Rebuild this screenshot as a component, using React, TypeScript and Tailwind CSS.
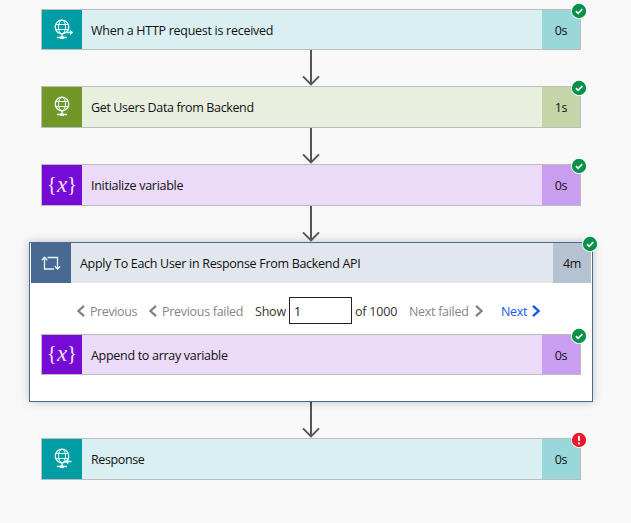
import type { ReactNode } from 'react';

type Tone = { icon: string; body: string; time: string };

const teal: Tone = { icon: 'bg-[#009da5]', body: 'bg-[#d9eff1]', time: 'bg-[#99d7db]' };
const green: Tone = { icon: 'bg-[#709727]', body: 'bg-[#e8efdf]', time: 'bg-[#c5d5a9]' };
const purple: Tone = { icon: 'bg-[#770bd6]', body: 'bg-[#ebdaf8]', time: 'bg-[#c99def]' };

function Globe({ arrow }: { arrow?: 'out' | 'in' }) {
  return (
    <svg className="ml-0.5" width="22" height="22" viewBox="0 0 22 22" fill="none" stroke="#e9ffff" strokeWidth="1.3">
      <circle cx="10" cy="8" r="6.8" />
      <ellipse cx="10" cy="8" rx="3.5" ry="6.8" strokeWidth="1" />
      <path d="M4 5.5h12M4 10.5h12" strokeWidth="1" />
      <path d="M10 15v4M5 18.5h10" strokeWidth="1.3" />
      <path d="M8.2 18.7h3.6" strokeWidth="2.6" />
      {arrow === 'out' && <path d="M15 13.5h5.3M18 11.4l2.3 2.1-2.3 2.1" />}
      {arrow === 'in' && <path d="M19.5 13.5h-5.3M16.3 11.4L14 13.5l2.3 2.1" />}
    </svg>
  );
}

function Variable() {
  return (
    <span className="flex items-center pb-0.5 font-['Liberation_Serif',serif] text-[21px] leading-none text-[#f4e5ff]">
      <span>{'{'}</span>
      <span className="text-[23px] italic leading-[21px]">x</span>
      <span>{'}'}</span>
    </span>
  );
}

function Status({ failed, className }: { failed?: boolean; className: string }) {
  return (
    <svg className={`absolute size-4 ${className}`} viewBox="0 0 16 16" fill="none">
      <circle cx="8" cy="8" r="8" fill="#fff" />
      <circle cx="8" cy="8" r="7.2" fill={failed ? '#e81c2d' : '#07924a'} />
      {failed ? (
        <path d="M8 3.8v5M8 10.4v1.8" stroke="#fff" strokeWidth="1.9" />
      ) : (
        <path d="M4.9 8.1l2.2 2.2 4.2-4.2" stroke="#fff" strokeWidth="1.6" />
      )}
    </svg>
  );
}

type CardProps = {
  tone: Tone;
  icon: ReactNode;
  title: string;
  time: string;
  size: string;
  tracking: string;
  failed?: boolean;
};

function Card({ tone, icon, title, time, size, tracking, failed }: CardProps) {
  return (
    <div className={`relative flex w-[540px] shrink-0 border border-[#bcbcbc] ${size} ${tone.body}`}>
      <div className={`flex w-10 shrink-0 items-center justify-center ${tone.icon}`}>{icon}</div>
      <div className={`flex flex-1 items-center whitespace-nowrap pl-[9px] pt-[3px] ${tracking}`}>{title}</div>
      <div className={`flex w-[38px] items-center justify-center pt-[3px] tracking-[-0.3px] ${tone.time}`}>{time}</div>
      <Status failed={failed} className="-right-[7px] -top-[7px]" />
    </div>
  );
}

function Arrow({ height, className }: { height: number; className: string }) {
  return (
    <svg className={`shrink-0 ${className}`} width="20" height={height} fill="none" stroke="#555" strokeWidth="2">
      <path d={`M10 0V${height - 1.6}M2 ${height - 9.6}l8 8 8-8`} />
    </svg>
  );
}

function Chevron({ right, color }: { right?: boolean; color: string }) {
  return (
    <svg className="-mt-0.5 shrink-0" width="8" height="12" fill="none" stroke={color} strokeWidth="2.3">
      <path d={right ? 'M1 .8L6.5 6 1 11.2' : 'M7 .8L1.5 6 7 11.2'} />
    </svg>
  );
}

export default function App() {
  return (
    <main className="flex h-[523px] w-[631px] flex-col items-center overflow-hidden bg-[#f8f8f8] pr-[9px] pt-[9px] font-['Open_Sans',sans-serif] text-[12.5px] text-[#111]">
      <Card tone={teal} icon={<Globe arrow="out" />} title="When a HTTP request is received" time="0s" size="h-[41px]" tracking="tracking-[-0.28px]" />
      <Arrow height={36} className="" />
      <Card tone={green} icon={<Globe />} title="Get Users Data from Backend" time="1s" size="h-[42px]" tracking="tracking-[-0.36px]" />
      <Arrow height={36} className="" />
      <Card tone={purple} icon={<Variable />} title="Initialize variable" time="0s" size="h-[42px]" tracking="tracking-[-0.28px]" />
      <Arrow height={36} className="relative z-10" />
      <section className="relative flex h-40 w-[564px] shrink-0 flex-col items-center border border-[#486991] bg-white shadow-[0_0_9px_rgba(0,0,0,0.22)]">
        <header className="flex h-10 w-full shrink-0 px-px">
          <div className="flex w-10 items-center justify-center bg-[#486991]">
            <svg width="20" height="16" fill="none" stroke="#e9f4ff" strokeWidth="1.3">
              <path d="M13 14H3.5V2.5M.8 5.2l2.7-2.9 2.7 2.9M6.5 2.5h10V14M13.8 11.2l2.7 2.9 2.7-2.9" />
            </svg>
          </div>
          <div className="flex flex-1 items-center whitespace-nowrap bg-[#e2e7ee] pl-[9px] pt-0.5 tracking-[-0.3px]">
            Apply To Each User in Response From Backend API
          </div>
          <div className="flex w-[38px] items-center justify-center bg-[#b5c2d2] pt-0.5 tracking-[-0.3px]">4m</div>
        </header>
        <Status className="-right-[6px] -top-[7px]" />
        <nav className="mt-3.5 flex h-[27px] w-full shrink-0 items-center whitespace-nowrap pl-[47px] text-[#858585]">
          <div className="flex w-[72px] items-center gap-[5px] pt-[3px] tracking-[-0.4px]"><Chevron color="#858585" />Previous</div>
          <div className="flex w-[106px] items-center gap-[5px] pt-[3px] tracking-[-0.3px]"><Chevron color="#858585" />Previous failed</div>
          <span className="w-[34px] pt-[3px] tracking-[-0.2px] text-[#333]">Show</span>
          <input className="h-[27px] w-[63px] border border-[#222] bg-white pl-1 pt-0.5 text-[#111] outline-none" defaultValue="1" aria-label="Iteration" />
          <span className="w-[57px] pl-[3px] pt-[3px] tracking-[-0.2px] text-[#333]">of 1000</span>
          <div className="flex w-[92px] items-center justify-between pr-[18px] pt-[3px] tracking-[-0.3px]"><span>Next failed</span><Chevron right color="#858585" /></div>
          <div className="flex items-center gap-[5px] pt-[3px] tracking-[-0.3px] text-[#1459ed]">Next<Chevron right color="#1459ed" /></div>
        </nav>
        <div className="mt-2.5">
          <Card tone={purple} icon={<Variable />} title="Append to array variable" time="0s" size="h-[41px]" tracking="tracking-[-0.3px]" />
        </div>
      </section>
      <Arrow height={36} className="" />
      <Card tone={teal} icon={<Globe arrow="in" />} title="Response" time="0s" size="h-[42px]" tracking="tracking-[-0.38px]" failed />
    </main>
  );
}
